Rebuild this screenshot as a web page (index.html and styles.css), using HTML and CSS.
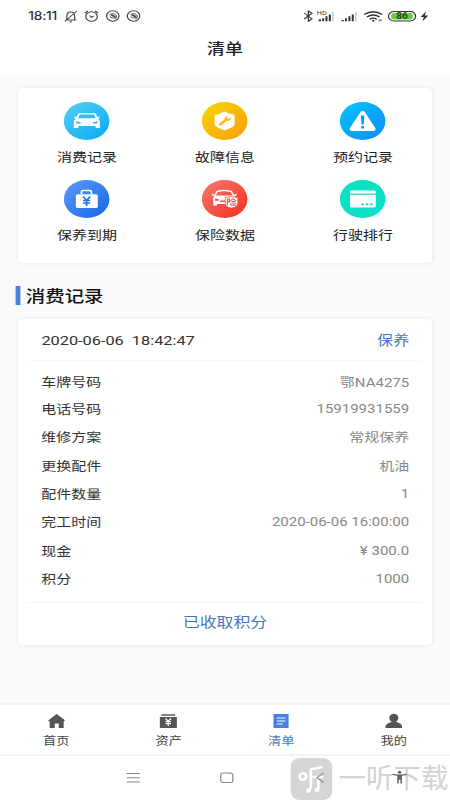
FILE: index.html
```html
<!DOCTYPE html>
<html lang="zh-CN">
<head>
<meta charset="utf-8">
<title>清单</title>
<link rel="stylesheet" href="styles.css">
</head>
<body>
<div class="screen">
  <header class="top">
    <div class="status">
      <span class="time">18:11</span>
      <svg class="status-left" width="66" height="14" viewBox="0 0 66 14" fill="none" stroke="#444" stroke-width="1">
        <path d="M1.5 11H10.5M2.7 11V7Q2.8 3 6 3Q9 3 9.2 7V11M5 12.7H7M1 12.5L11 2"/>
        <circle cx="23.3" cy="7.5" r="4.8"/><path d="M21.5 6.5L23.3 8.3L25.2 6.8M17.8 4L20.3 2M28.8 4L26.3 2"/>
        <g id="eye"><circle cx="41" cy="7" r="5.2"/><path stroke="#777" d="M38 6Q41 2.8 44 6.5Q44.5 9 42.5 10M38.5 7.5Q40 10 44 8" /><path d="M39.500 5.800L43 7.700" stroke-width="1.700"/></g>
        <use href="#eye" x="17.3"/>
      </svg>
      <svg class="status-right" width="105" height="16" viewBox="0 0 105 16" fill="none" stroke="#333">
        <path d="M1.500 5L8 11L5 13.2V3L8 5.3L1.500 11" stroke-width="1"/>
        <g fill="#333" stroke="none"><path d="M13.500 11.500h2v1.8h-2zM16.500 10.300h1.6v3h-1.6zM19.200 8.300h1.7v5h-1.7zM22 6.500h1.7v6.800H22zM32.500 12h2v1.300h-2zM35.500 10.300h1.600v3h-1.600zM38.300 8.300H40v5h-1.700zM41.100 6.500h1.700v6.800h-1.700z"/><path fill="#ccc" d="M24.600 4H26v9.300h-1.400zM43.800 4h1.400v9.300h-1.400z"/></g>
        <text class="hd" x="12" y="6.8">HD</text>
        <path d="M51.5 6.500Q59 1 66.500 6.500M53.700 9Q59 5 64.300 9M56 11.200Q59 9 62 11.200" stroke-width="1.3"/><circle cx="59" cy="12.700" r="1" fill="#333" stroke="none"/><path d="M64 13.500V11M65.500 11V13.500" stroke-width=".7"/>
        <rect x="71.800" y="3.500" width="22.500" height="9.500" rx="4.500" stroke-width="1"/><rect x="74" y="5" width="18" height="6.500" rx="2" fill="#69cb42" stroke="none"/>
        <text class="charge" x="83" y="11.200">86</text>
        <path d="M103 3.500L98.500 9H101.200L100 13.500L105 7.500H102Z" fill="#333" stroke="none"/>
      </svg>
    </div>
    <h1>清单</h1>
  </header>

  <main>
    <section class="card menu">
      <a class="item"><svg viewBox="0 0 38 38"><defs><linearGradient id="g1" x1="0" y1="0" x2="1" y2="1"><stop stop-color="#55cff5"/><stop offset="1" stop-color="#08a9f5"/></linearGradient></defs><circle cx="19" cy="19" r="19" fill="url(#g1)"/><path d="M13.500 11H25Q26.500 11 27.200 13L28 15L30 14.700L29.500 16.300L28.700 16.700Q30 18 30 20V26H26.500V24H12V26H8.300V20Q8.300 18 10 16.700L8.800 16L8.500 14.700L10.500 15L11.500 12.500Q12 11 13.500 11Z" fill="#fff"/><path d="M13.300 12.500H25L26.500 16.300H11.800ZM10 19.300L14 20.300V21.500H10.500ZM28.300 19.300L24.300 20.300V21.500H27.800Z" fill="#30bdf3"/></svg><span>消费记录</span></a>
      <a class="item"><svg viewBox="0 0 38 38"><defs><linearGradient id="g2" x1="0" y1="0" x2="1" y2="1"><stop stop-color="#fad505"/><stop offset="1" stop-color="#fa9d0b"/></linearGradient></defs><circle cx="19" cy="19" r="19" fill="url(#g2)"/><path d="M18.700 9.500Q23 12 27 12.500Q27.500 13 27.300 16V23Q27 24.500 19 28.500Q11 24.500 10.700 23V13Q15 12.300 18.700 9.500Z" fill="#fff"/><path d="M14 22L19 17.300Q18.700 14.500 22 14L21 16L22 17L24.200 15.600Q24.500 19.300 20.500 19L15.800 23.500Q14.500 24 14 22Z" fill="#fabc08"/></svg><span>故障信息</span></a>
      <a class="item"><svg viewBox="0 0 38 38"><defs><linearGradient id="g3" x1="0" y1="0" x2="1" y2="1"><stop stop-color="#05c6fa"/><stop offset="1" stop-color="#0c8df7"/></linearGradient></defs><circle cx="19" cy="19" r="19" fill="url(#g3)"/><path d="M19 11L27.800 27H10.200Z" fill="#fff" stroke="#fff" stroke-width="4" stroke-linejoin="round"/><path d="M17.500 13.500H20.500L19.900 22.500H18.100ZM17.800 24H20.200V26.500H17.800Z" fill="#079df7"/></svg><span>预约记录</span></a>
      <a class="item"><svg viewBox="0 0 38 38"><defs><linearGradient id="g4" x1="0" y1="0" x2="1" y2="1"><stop stop-color="#5a9cf8"/><stop offset="1" stop-color="#1764e9"/></linearGradient></defs><circle cx="19" cy="19" r="19" fill="url(#g4)"/><path d="M14.700 14V12Q14.700 10.500 16.200 10.500H21.500Q23 10.500 23 12V14" fill="none" stroke="#fff" stroke-width="1.500"/><rect x="10" y="14.300" width="18.300" height="13.700" rx="1.500" fill="#fff"/><path d="M16 16.500L19 20.500L22 16.500M19 20.500V26M16 20.500H22M16 23H22" stroke="#2873ed" stroke-width="1.500" fill="none"/></svg><span>保养到期</span></a>
      <a class="item"><svg viewBox="0 0 38 38"><defs><linearGradient id="g5" x1="0" y1="0" x2="1" y2="1"><stop stop-color="#f67c70"/><stop offset="1" stop-color="#f72c1d"/></linearGradient></defs><circle cx="19" cy="19" r="19" fill="url(#g5)"/><path d="M10.500 16.500L12.700 11.500Q18 9.500 24.500 11.500L27 16.500" fill="none" stroke="#fff" stroke-width="1.400"/><path d="M8.500 13.500L11.500 15.500H26L29 13.500V15L27.500 16.500L28.500 19H20V24H12.500V25.500H9.500V18L10.500 16.300L8.500 15Z" fill="#fff"/><path d="M11 18.300L14 19.300V20.700H11ZM15.500 20.500H20V22H15Z" fill="#f75247"/><path d="M19.500 17.500L24.500 16.500L30 17.500V24Q29.500 27 24.800 28.300Q20 27 19.500 24Z" fill="#fff" stroke="#f75247" stroke-width=".7"/><path d="M21.300 19V25M21.300 19H23Q22.500 21 23 22H21.300M26 18.500L23.500 21M26 18.500L28.700 21M24.500 21.500H27.700M24 23L24.500 24M26 22.500V24M28 22.500L27.500 24M23.500 25H28.700" stroke="#f44338" stroke-width=".9" fill="none"/></svg><span>保险数据</span></a>
      <a class="item"><svg viewBox="0 0 38 38"><circle cx="19" cy="19" r="19" fill="#0bdfc5"/><path d="M9 10.500H29Q30 10.500 30 12V13.600H8.500V12Q8.500 10.500 9 10.500ZM8.500 14.800H30V26Q30 27.500 28.500 27.500H10Q8.500 27.500 8.500 26Z" fill="#fff"/><path d="M18 23.500H20V25.300H18ZM21.700 23.500H23.700V25.300H21.700ZM25.300 23.500H27.300V25.300H25.300Z" fill="#0bdfc5"/></svg><span>行驶排行</span></a>
    </section>

    <h2>消费记录</h2>

    <section class="card record">
      <div class="record-head"><time>2020-06-06&nbsp; 18:42:47</time><span>保养</span></div>
      <dl>
        <div class="plate"><dt>车牌号码</dt><dd>鄂NA4275</dd></div>
        <div><dt>电话号码</dt><dd>15919931559</dd></div>
        <div><dt>维修方案</dt><dd>常规保养</dd></div>
        <div><dt>更换配件</dt><dd>机油</dd></div>
        <div><dt>配件数量</dt><dd>1</dd></div>
        <div><dt>完工时间</dt><dd>2020-06-06 16:00:00</dd></div>
        <div><dt>现金</dt><dd><span class="yen">¥</span>300.0</dd></div>
        <div><dt>积分</dt><dd>1000</dd></div>
      </dl>
      <div class="record-foot">已收取积分</div>
    </section>
  </main>

  <nav class="tabs">
    <a><svg viewBox="0 0 16 16" preserveAspectRatio="none"><path d="M8 1L16 7.500L14.500 8.500V15H10V10.500H6.300V15H1.500V8.500L0 7.500Z" fill="#555"/></svg><span>首页</span></a>
    <a><svg viewBox="0 0 16 16" preserveAspectRatio="none"><path d="M1.500 1.300H14.500V2.700H1.500ZM0 4H16V15H0Z" fill="#555"/><path d="M5.500 5.500L8 8.300L10.500 5.500M8 8V13M5.500 8.700H10.500M5.500 10.700H10.500" stroke="#fff" stroke-width="1.200" fill="none"/></svg><span>资产</span></a>
    <a class="active"><svg viewBox="0 0 16 16" preserveAspectRatio="none"><path d="M1 1H15V15H1Z" fill="#4680e4"/><path d="M4 5H12M4 8H12M4 11H9.500" stroke="#fff" stroke-width="1.200"/></svg><span>清单</span></a>
    <a><svg viewBox="0 0 16 16" preserveAspectRatio="none"><ellipse cx="8" cy="5" rx="4.200" ry="4.200" fill="#555"/><path d="M0 15Q0 10.500 5.500 9H10.500Q16 10.500 16 15Z" fill="#555"/></svg><span>我的</span></a>
  </nav>

  <footer class="system">
    <svg viewBox="0 0 14 14"><path d="M1.500 3H12.500M1.500 7.200H12.500M1.500 11.500H12.500" /></svg>
    <svg viewBox="0 0 14 14"><rect x="2" y="2.500" width="10" height="9.500" rx="2"/></svg>
    <svg viewBox="0 0 14 14"><path d="M9.700 2.300L4 7.200L9.700 12"/></svg>
    <svg class="person" viewBox="0 0 14 14"><circle cx="7" cy="1.700" r="1.500"/><path d="M1 3.200Q7 4.700 13 3.200V4.500L9 5.300V13H7.700V9.300H6.300V13H5V5.300L1 4.500Z"/></svg>
    <div class="watermark">
      <svg width="42" height="42" viewBox="0 0 42 42"><rect width="42" height="42" rx="9" fill="#d5d5d5"/><g fill="none" stroke="#fff" stroke-width="2.600" stroke-linecap="round"><circle cx="12.500" cy="18.500" r="3.300"/><path d="M31 9Q26 11 20.500 11V27Q20.500 31 18.500 33M20.500 19H32M28 19V31"/></g><circle cx="18" cy="32.500" r="2.300" fill="#fff"/><circle cx="26.500" cy="32" r="2.300" fill="#fff"/></svg>
      <span>一听下载</span>
    </div>
  </footer>
</div>
</body>
</html>
```
FILE: styles.css
```css
* { box-sizing: border-box; margin: 0; padding: 0; }
html, body { width: 450px; height: 800px; overflow: hidden; }
body { background: #fff; }

/* 375px-wide layout shown on a 450px-wide display */
.screen {
  width: 375px;
  height: 800px;
  display: flex;
  flex-direction: column;
  transform: scaleX(1.2);
  transform-origin: 0 0;
  font-family: Roboto, "Noto Sans CJK SC", sans-serif;
  font-size: 12.5px;
  color: #333;
}

.top { height: 73px; background: #fff; }
.status { height: 32px; display: flex; align-items: center; padding: 0 18.3px 0 23.5px; }
.time { width: 29px; font: 500 11.5px Inter, sans-serif; letter-spacing: -.2px; white-space: nowrap; }
.status-left { margin-left: .5px; }
.status-right { margin-left: auto; }
.hd { font: 6px Roboto, sans-serif; fill: #333; stroke: none; }
.charge { font: 700 8.5px Roboto, sans-serif; fill: #254c18; stroke: none; text-anchor: middle; }
h1 { padding-top: 1px; font-size: 15px; line-height: 33px; font-weight: 500; text-align: center; color: #222; }

main { height: 630px; background: #fafafa; padding: 15px 15px 0; }
.card { background: #fff; border-radius: 4px; box-shadow: 0 0 5px rgba(0, 0, 0, .08); }
.menu {
  height: 175px;
  display: grid;
  grid-template-columns: repeat(3, 1fr);
  grid-auto-rows: 78px;
  padding-top: 14px;
}
.item { display: flex; flex-direction: column; align-items: center; }
.item svg { width: 38.4px; height: 38px; }
.item span { line-height: 20px; margin-top: 8px; color: #222; }

h2 {
  display: flex;
  align-items: center;
  height: 56px;
  margin: 4px 0 -4px -2.5px;
  font-size: 16.2px;
  font-weight: 500;
  color: #111;
}
h2::before { content: ""; width: 4.5px; height: 19px; margin-right: 4.5px; background: #4680e0; }

.record { height: 326px; }
.record-head {
  height: 42px;
  margin: 0 9px 0 10px;
  padding: 0 10px 2px 9.5px;
  border-bottom: 1px solid #f7f7f7;
  display: flex;
  justify-content: space-between;
  align-items: center;
  font-size: 13.4px;
}
.record-head time { font-size: 13.6px; padding-top: 2px; }
.record-head span { color: #4678c0; }
dl { height: 241px; padding: 7.5px 19px 0 19.3px; }
dl div { height: 28.3px; display: flex; justify-content: space-between; align-items: center; }
dl .plate { height: 26px; }
dt { color: #333; }
dd { color: #888; }
.yen { display: inline-block; width: 11px; text-align: center; margin-right: 1px; }
.record-foot {
  height: 39px;
  margin: 0 7px;
  border-top: 1px solid #f5f5f5;
  text-align: center;
  font-size: 14.1px;
  line-height: 39px;
  color: #4678c0;
}

.tabs { height: 53px; display: flex; border-top: 2px solid #f3f3f3; border-bottom: 2px solid #f5f5f5; background: #fff; }
.tabs a { flex: 1; display: flex; flex-direction: column; align-items: center; padding-top: 8px; font-size: 11px; line-height: 16px; color: #444; }
.tabs svg { width: 14.4px; height: 16px; margin-bottom: 5px; }
.tabs .active { color: #4678c0; }

.system { position: relative; height: 44px; display: flex; gap: 64px; padding: 14px 0 0 104px; background: #fff; }
.system > svg { width: 14px; height: 15px; flex: none; fill: none; stroke: #888; stroke-width: 1; position: relative; z-index: 1; }
.system .person { margin-left: -12px; fill: #666; stroke: none; }
.watermark {
  position: absolute;
  left: 241.7px;
  top: 2px;
  display: flex;
  align-items: center;
  transform: scaleX(.8333);
  transform-origin: 0 0;
  white-space: nowrap;
}
.watermark span { margin-left: 6px; font-size: 27.5px; line-height: 42px; font-weight: 400; color: #d2d2d2; }
```
